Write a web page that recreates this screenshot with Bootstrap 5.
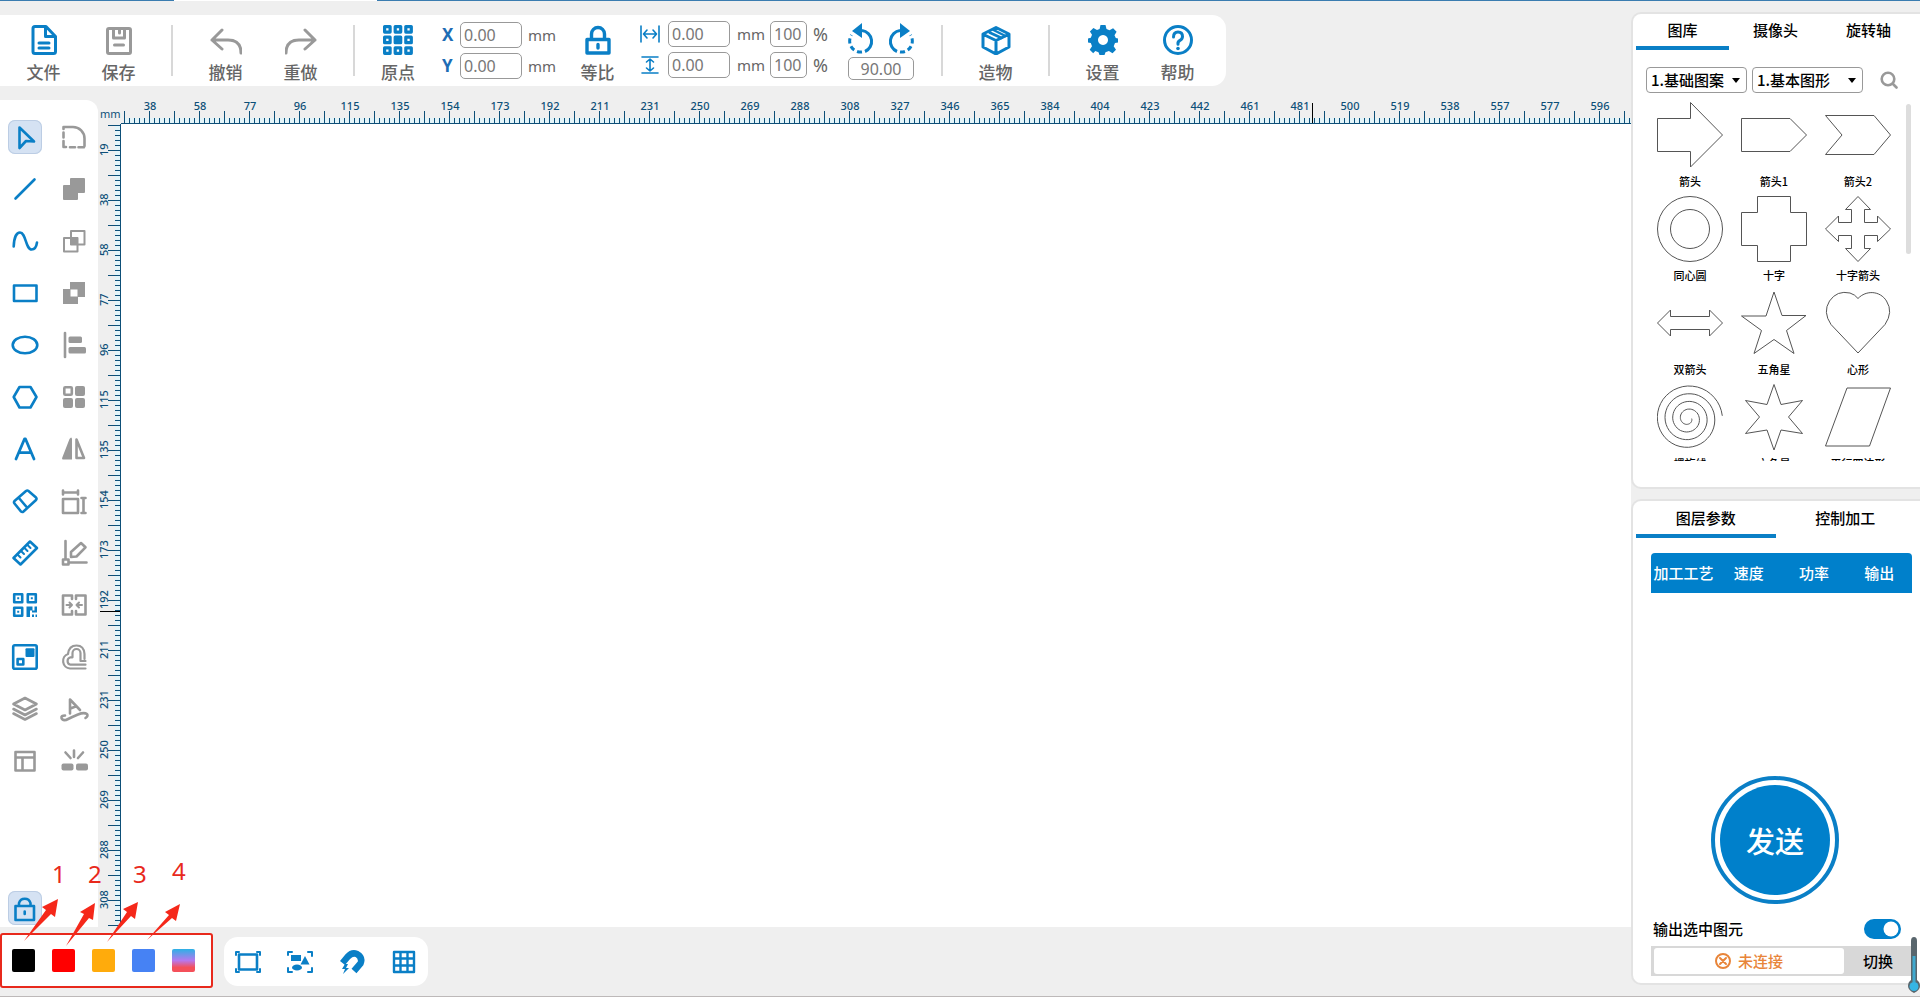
<!DOCTYPE html>
<html lang="zh-CN">
<head>
<meta charset="utf-8">
<meta name="viewport" content="width=device-width, initial-scale=1">
<title>激光雕刻</title>
<link href="https://cdn.jsdelivr.net/npm/bootstrap@5.3.0/dist/css/bootstrap.min.css" rel="stylesheet">
<style>
:root{--brand:#0a7fc6;--ink:#0d4f78;--shade:#efefef;--mute:#999}
body{background:var(--shade);font-family:"Noto Sans","Noto Sans CJK SC",sans-serif;font-size:15px;line-height:20px;color:#000;overflow:hidden}
svg{display:block;flex:none}
button{background:none;border:0;padding:0;color:inherit}
.ln{fill:none;stroke:currentColor;stroke-width:2.6;stroke-linejoin:round;stroke-linecap:round}
.fl{fill:currentColor;stroke:none}
.brand{color:var(--brand)}
.mute{color:var(--mute)}
.topline{height:1px}
.topline span{background:#3a7cb0}
.topline .seg-a{width:174px}
.topline .seg-b{width:203px;background:#fff}
.bottomline{height:1px;background:#bdb9b9}

/* toolbar */
.toolbar{flex:none;height:71px;margin:14px 0;padding:0 11px 0 6px;border-radius:0 14px 14px 0;color:#666;font-size:15px}
.act{width:75px;padding-top:10px;gap:6px}
.act.slim{width:56px}
.act span{font-size:17px;line-height:22px;font-weight:500;font-family:"Noto Sans CJK SC",sans-serif}
.rule{width:32px;padding:10px 15px}
.rule i{display:block;width:2px;height:51px;background:#d8d8d8}
.fld{height:26px;border:1px solid #999;border-radius:5px;padding:0 3px;color:#777;background:#fff;font-size:16px;line-height:22px;width:62px}
.fld.pct{width:37px}
.fld.deg{width:66px;height:23px;text-align:center}
.axis{width:18px;font-size:17px;font-weight:700;color:#1d6db5}
.xy{margin-left:16px;padding-top:7px;gap:5px}
.xy .unit{width:38px;padding-left:6px}
.wh{margin-left:5px;padding-top:6px;gap:5px}
.wh .unit{width:40px;padding-left:7px}
.wh .pc{width:41px;padding-left:6px;font-size:18px}
.rot{width:66px;margin-right:12px;padding-top:7px;gap:3px}

/* left tools */
.tools{width:98px;flex:none;border-radius:0 12px 0 0;padding:20px 7px 2px 8px}
.tools .col2{display:grid;grid-template-columns:34px 34px;column-gap:15px;row-gap:18px}
.tool{width:34px;height:34px;border-radius:7px}
.tool.on{background:#d5e2f3;box-shadow:inset 0 0 0 1px #bccde4}

/* rulers */
.board{display:grid;grid-template-columns:23px minmax(0,1fr);grid-template-rows:24px minmax(0,1fr)}
.corner{font-size:11px;line-height:14px;color:var(--ink);padding:7px 0 0 2px}
.hr-ruler,.vr-ruler{--t:var(--ink);color:var(--ink);font-size:11px;font-weight:500;line-height:12px;position:relative}
.hr-ruler{border-bottom:1px solid var(--t);padding-left:4px;
 background:repeating-linear-gradient(90deg,var(--t) 0 1px,transparent 1px 25px) 3px 11px/100% 12px no-repeat,
 repeating-linear-gradient(90deg,var(--t) 0 1px,#e3f4f9 1px 5px) 3px 18px/100% 5px no-repeat}
.hr-ruler span{width:50px;flex:none;text-align:center}
.vr-ruler{border-right:1px solid var(--t);padding-top:1px;
 background:repeating-linear-gradient(180deg,var(--t) 0 1px,transparent 1px 25px) 10px 1px/12px 100% no-repeat,
 repeating-linear-gradient(180deg,var(--t) 0 1px,#e3f4f9 1px 5px) 17px 1px/5px 100% no-repeat}
.vr-ruler span{height:50px;flex:none;width:12px;text-align:center;writing-mode:vertical-rl;transform:rotate(180deg)}
.hmark{position:absolute;width:1px;height:20px;top:3px;background:#000}
.vmark{position:absolute;height:1px;width:20px;left:2px;background:#000}

/* bottom strip */
.strip{height:69px;flex:none;position:relative;padding-top:6px;gap:11px}
.palette{width:213px;height:55px;border:2px solid #e8291c;border-radius:3px;padding:0 10px;gap:17px}
.sw{width:23px;height:23px;border-radius:2px}
.sw-k{background:#000}.sw-r{background:#f00}.sw-o{background:#ffab0c}.sw-b{background:#4682f4}
.sw-g{background:linear-gradient(#2cb1e6,#b678ee 50%,#f4505a 80%,#f4505a)}
.snap{width:204px;height:49px;margin-top:4px;border-radius:14px;padding:0 11px}
.notes{position:absolute;left:0;bottom:39px;pointer-events:none}
.notes text{font-size:24px;fill:#e8291c}

/* side panels */
.side{width:289px;flex:none;padding:11px 0;gap:10px;font-family:"Noto Sans CJK SC",sans-serif}
.pane{border:2px solid #e3e3e3;border-right:0;border-radius:10px 0 0 10px;background:#fff}
.tabs{margin:0 5px 0 3px}
.tabs button{flex:1 1 0;height:36px;border-bottom:4px solid transparent;font-size:15px;font-weight:500}
.tabs.low button{height:37px}
.tabs button.on{border-color:var(--brand)}
.pick{height:26px;border:1px solid #999;border-radius:4px;font-size:15px;font-weight:500;padding:0 0 1px 4px;color:#000;appearance:none;
 background:#fff url("data:image/svg+xml,%3Csvg xmlns='http://www.w3.org/2000/svg' width='8' height='5'%3E%3Cpath d='M0 0h8L4 5z'/%3E%3C/svg%3E") right 6px center no-repeat}
.pick-a{width:101px}.pick-b{width:111px}
.filters{margin:17px 0 0 13px;gap:5px}
.seek{margin-left:12px}
.gallery{height:359px;margin:9px 0 26px 15px;overflow:hidden}
.shapes{display:grid;grid-template-columns:repeat(3,84px);align-content:start}
.shapes button{display:flex;flex-direction:column;align-items:center;height:94px;gap:5px;font-size:11px;line-height:16px;font-weight:500}
.shapes svg{fill:none;stroke:#555;stroke-width:1}
.thumb{width:5px;height:150px;margin:2px 0 0 6px;border-radius:3px;background:#ddd}
.layers{margin:15px 8px 0 18px;color:#fff}
.layers table{width:100%;table-layout:fixed}
.layers th{background:#0080cb;height:40px;text-align:center;font-weight:500;white-space:nowrap;padding:0}
.layers th:first-child{border-radius:4px 0 0 0}.layers th:last-child{border-radius:0 4px 0 0}
.send{width:128px;height:128px;border-radius:50%;border:4px solid var(--brand);padding:5px;margin:auto 0 15px 78px}
.send span{display:flex;align-items:center;justify-content:center;height:100%;border-radius:50%;background:#0080cb;color:#fff;font-size:29px;font-weight:500}
.outrow{padding:0 19px 0 20px;font-weight:500}
.form-check-input.tog{width:37px;height:20px;margin:0;border:0;background-color:#0080cb;float:none}
.conn{margin:7px 8px 7px 18px;height:30px;background:#d8d8d8;padding:2px 0 2px 3px;font-weight:500}
.conn .state{width:190px;background:#fff;border-radius:3px;color:#e8853a;gap:7px}
.thermo{position:fixed;right:0;bottom:4px}
.rowfit{min-height:0}.colfit{min-width:0}
</style>
</head>
<body class="d-flex flex-column vh-100">
<div class="topline d-flex"><span class="seg-a"></span><span class="seg-b"></span><span class="flex-fill"></span></div>
<div class="rowfit d-flex flex-fill">
<main class="colfit d-flex flex-column flex-fill">

<header class="toolbar bg-white d-flex align-self-start">
 <button class="act d-flex flex-column align-items-center"><svg class="brand" width="30" height="30"><path class="ln" style="stroke-width:3" d="M4 3.500q0-2 2-2h11l9.500 10v15q0 2-2 2H6q-2 0-2-2zM16.500 2v9.500h9M10 18h10M10 23h10"/></svg><span>文件</span></button>
 <button class="act d-flex flex-column align-items-center"><svg class="mute" width="30" height="30"><path class="ln" style="stroke-width:3" d="M3.500 5q0-1.500 1.500-1.500h20q1.500 0 1.500 1.500v22q0 1.500-1.500 1.500H5q-1.500 0-1.500-1.500zM9.500 4v9h11V4M15.500 4v4M10.500 20h9"/></svg><span>保存</span></button>
 <div class="rule"><i></i></div>
 <button class="act d-flex flex-column align-items-center"><svg class="mute" width="32" height="30"><path class="ln" style="stroke-width:3" d="M12 5L2 15l10 9M2 15h16q13 0 13 13"/></svg><span>撤销</span></button>
 <button class="act d-flex flex-column align-items-center"><svg class="mute" width="32" height="30"><path class="ln" style="stroke-width:3" d="M20 5l10 10-10 9M30 15H14Q1 15 1 28"/></svg><span>重做</span></button>
 <div class="rule"><i></i></div>
 <button class="act slim d-flex flex-column align-items-center"><svg class="brand" width="30" height="30"><g class="ln" style="stroke-width:3.200"><rect x="1.600" y="1.600" width="5.500" height="5.500"/><rect x="12.200" y="1.600" width="5.500" height="5.500"/><rect x="22.800" y="1.600" width="5.500" height="5.500"/><rect x="1.600" y="12.200" width="5.500" height="5.500"/><rect x="12.200" y="12.200" width="5.500" height="5.500" fill="currentColor"/><rect x="22.800" y="12.200" width="5.500" height="5.500"/><rect x="1.600" y="22.800" width="5.500" height="5.500"/><rect x="12.200" y="22.800" width="5.500" height="5.500"/><rect x="22.800" y="22.800" width="5.500" height="5.500"/></g></svg><span>原点</span></button>
 <div class="xy d-flex flex-column">
  <div class="d-flex align-items-center"><label class="axis" for="px">X</label><input class="fld" id="px" value="0.00"><span class="unit">mm</span></div>
  <div class="d-flex align-items-center"><label class="axis" for="py">Y</label><input class="fld" id="py" value="0.00"><span class="unit">mm</span></div>
 </div>
 <button class="act d-flex flex-column align-items-center"><svg class="brand" width="30" height="30"><path class="ln" style="stroke-width:3.400" d="M4 14.500h22v13.500H4zM8.500 14V9a6.500 6.500 0 0 1 13 0v5M15 19.500v3.500"/></svg><span>等比</span></button>
 <div class="wh d-flex flex-column">
  <div class="d-flex align-items-center"><label for="sw" aria-label="宽" class="me-2"><svg class="brand" width="20" height="18"><path class="ln" style="stroke-width:1.600" d="M1 1v16M19 1v16M4 9h12M7 5L3.500 9 7 13M13 5l3.500 4-3.500 4"/></svg></label><input class="fld" id="sw" value="0.00"><span class="unit">mm</span><input class="fld pct" aria-label="宽度百分比" value="100"><span class="pc">%</span></div>
  <div class="d-flex align-items-center"><label for="sh" aria-label="高" class="me-2"><svg class="brand" width="20" height="18"><path class="ln" style="stroke-width:1.600" d="M2 1h16M2 17h16M10 3v12M6.500 6L10 3l3.500 3M6.500 12l3.500 3 3.500-3"/></svg></label><input class="fld" id="sh" value="0.00"><span class="unit">mm</span><input class="fld pct" aria-label="高度百分比" value="100"><span class="pc">%</span></div>
 </div>
 <div class="rot d-flex flex-column">
  <div class="d-flex justify-content-between">
   <button aria-label="逆时针旋转" class="brand"><svg width="27" height="32"><path class="ln" style="stroke-width:3;stroke-linecap:butt" d="M14 8.500a11 11 0 0 1 3 21"/><path class="ln" style="stroke-width:3;stroke-linecap:butt;stroke-dasharray:5 3" d="M14 30A11 11 0 0 1 3.500 13"/><path class="fl" d="M4 9l10-8v15z"/></svg></button>
   <button aria-label="顺时针旋转" class="brand"><svg width="27" height="32"><path class="ln" style="stroke-width:3;stroke-linecap:butt" d="M13 8.500a11 11 0 0 0-3 21"/><path class="ln" style="stroke-width:3;stroke-linecap:butt;stroke-dasharray:5 3" d="M13 30A11 11 0 0 0 23.500 13"/><path class="fl" d="M23 9L13 1v15z"/></svg></button>
  </div>
  <input class="fld deg" aria-label="旋转角度" value="90.00">
 </div>
 <div class="rule"><i></i></div>
 <button class="act d-flex flex-column align-items-center"><svg class="brand" width="30" height="30"><path class="ln" style="stroke-width:3" d="M15 2.500l13 6.500v13l-13 7-13-7V9zM2.500 9.500L15 15.500l12.500-6M15 15.500V29"/><path class="ln" style="stroke-width:2.500" d="M8.500 7.500l12 5.500M12.500 5l12 6"/></svg><span>造物</span></button>
 <div class="rule"><i></i></div>
 <button class="act d-flex flex-column align-items-center"><svg class="brand" width="30" height="30" viewBox="0 0 30 30"><path fill="currentColor" fill-rule="evenodd" d="M12.500 0h5l1 4 3 1.300 3.600-2.100 3.500 3.500-2.100 3.600L27.800 13l2.200.500v4l-3 .500-1.300 3.200 2.300 3.600-3.500 3.500-3.600-2.300-3.400 1.300-1 2.700h-5l-1-2.700-3.200-1.300L5.200 28.300l-3.500-3.500L4 21.200 2.800 18 0 17.500v-4l2.800-.7L4 9.700 1.900 6.400l3.500-3.500L9 5l2.600-1zM15 10a5 5 0 1 0 .01 0z"/></svg><span>设置</span></button>
 <button class="act d-flex flex-column align-items-center"><svg class="brand" width="30" height="30"><circle class="ln" style="stroke-width:3" cx="15" cy="15" r="13.500"/><path class="ln" style="stroke-width:3" d="M10.500 12q0-5 4.500-5t4.500 4.500q0 2.500-2.500 3.800t-2 4"/><circle class="fl" cx="15" cy="23.500" r="1.800"/></svg><span>帮助</span></button>
</header>

<div class="rowfit d-flex flex-fill">
 <nav class="tools bg-white d-flex flex-column justify-content-between" aria-label="绘图工具">
  <div class="col2">
   <button class="tool on brand" aria-label="选择"><svg width="34" height="34"><path class="ln" d="M11.500 7.500L26 21.500l-8-.5-6.500 7z"/></svg></button>
   <button class="tool mute" aria-label="倒角"><svg width="34" height="34"><path class="ln" d="M6.500 9V7H16a11.500 11.500 0 0 1 11.500 11.500V26M6.500 12.500v5M6.500 21v6H9M13 27.300h5M21.500 27.300h5.500"/></svg></button>
   <button class="tool brand" aria-label="直线"><svg width="34" height="34"><path class="ln" d="M7.500 26.500L26.500 7.500"/></svg></button>
   <button class="tool mute" aria-label="并集"><svg width="34" height="34"><path class="fl" d="M14 6h13q1 0 1 1v13q0 1-1 1h-6v6q0 1-1 1H7q-1 0-1-1V14q0-1 1-1h6V7q0-1 1-1z"/></svg></button>
   <button class="tool brand" aria-label="曲线"><svg width="34" height="34"><path class="ln" d="M5.700 22.500C6 14 8.500 8.500 12 8.500c6 0 5.500 17 11.700 17 3.300 0 4.800-3.500 5.300-7"/></svg></button>
   <button class="tool mute" aria-label="交集"><svg width="34" height="34"><path class="ln" style="stroke-width:2" d="M14 7h13.500v13.500H14zM7 14h13.500v13.500H7z"/><path class="fl" d="M13 13h8v8h-8z"/></svg></button>
   <button class="tool brand" aria-label="矩形"><svg width="34" height="34"><rect class="ln" x="6" y="9.500" width="22.500" height="15.500"/></svg></button>
   <button class="tool mute" aria-label="差集"><svg width="34" height="34"><path class="fl" fill-rule="evenodd" d="M13 6h15v15h-7v7H6V13h7zM13.500 13.500v7h7v-7z"/></svg></button>
   <button class="tool brand" aria-label="椭圆"><svg width="34" height="34"><ellipse class="ln" cx="17" cy="17" rx="12.300" ry="8.300"/></svg></button>
   <button class="tool mute" aria-label="对齐"><svg width="34" height="34"><path class="ln" d="M8 5v24"/><rect class="fl" x="11.500" y="8.500" width="13.500" height="6.500" rx="1.500"/><rect class="fl" x="11.500" y="19" width="17.500" height="6.500" rx="1.500"/></svg></button>
   <button class="tool brand" aria-label="多边形"><svg width="34" height="34"><path class="ln" d="M11.500 7h11L28.500 17l-6 10.500h-11L5.700 17z"/></svg></button>
   <button class="tool mute" aria-label="阵列"><svg width="34" height="34"><rect class="ln" x="7.300" y="7.300" width="7.500" height="7.500" rx="1"/><rect class="fl" x="18" y="6" width="10" height="10" rx="2"/><rect class="fl" x="6" y="18" width="10" height="10" rx="2"/><rect class="fl" x="18" y="18" width="10" height="10" rx="2"/></svg></button>
   <button class="tool brand" aria-label="文字"><svg width="34" height="34"><path class="ln" style="stroke-width:2.800" d="M8 27L16.500 7h1L26 27M11 20.700h12"/></svg></button>
   <button class="tool mute" aria-label="镜像"><svg width="34" height="34"><path class="fl" d="M15 27.500H6.500q-2 0-1.200-2L12.500 7q2-3 2.500 0z"/><path class="ln" d="M19.500 7.500v18.500H27z"/></svg></button>
   <button class="tool brand" aria-label="橡皮"><svg width="34" height="34"><path class="ln" d="M18 7q1.300-1 2.500 0l7.500 6.500q1 1.200 0 2.500L15.500 27.500q-1.200 1-2.500 0L6.500 19.500q-1-1.200 0-2.500zM10.500 13.500l8.500 10"/></svg></button>
   <button class="tool mute" aria-label="尺寸"><svg width="34" height="34"><rect class="ln" x="6" y="15" width="15" height="14"/><path class="ln" d="M6 8.500h15M6 6.500v4M21 6.500v4M26.500 14v15M24.500 14h4M24.500 29h4"/></svg></button>
   <button class="tool brand" aria-label="测量"><svg width="34" height="34"><path class="ln" d="M22 5.500l7 6.500-16.500 16.500L5.500 22z"/><path class="ln" style="stroke-width:2" d="M9.500 18.500l3 3M13 15l3 3M16.500 12l3 3M19.500 9l3 3"/></svg></button>
   <button class="tool mute" aria-label="节点编辑"><svg width="34" height="34"><path class="ln" d="M8.500 5v18M12 26.500h17.500M6 23.500h5.500v5H6zM24 7l4.500 4.300L19.500 20.500l-5.500.5v-5z"/></svg></button>
   <button class="tool brand" aria-label="二维码"><svg width="34" height="34"><path class="ln" d="M6.200 6.200h8v8h-8zM19.800 6.200h8v8h-8zM6.200 19.800h8v8h-8z"/><path class="fl" d="M9.200 9.200h2v2h-2zM22.800 9.200h2v2h-2zM9.200 22.800h2v2h-2zM18.500 18.500h6v4h-2.500v6.500h-3.500zM26.500 18.500H29v6h-5v-2h2.500zM24 26.500h2V29h-2zM27.500 26.500H29V29h-1.500z"/></svg></button>
   <button class="tool mute" aria-label="断开"><svg width="34" height="34"><path class="ln" d="M6 14V7.500h9V11M15 23v3.500H6V20M19 11V7.500h9.500v19H19V23M6 14v6"/><path class="ln" style="stroke-width:2" d="M9.500 17H15M12.500 14.500L15 17l-2.500 2.500M25 17h-5.500M22 14.500L19.500 17l2.500 2.500"/></svg></button>
   <button class="tool brand" aria-label="位图"><svg width="34" height="34"><rect class="ln" x="5.200" y="5.300" width="23.500" height="23.500" rx="1.500"/><rect class="fl" x="17.500" y="8.300" width="9" height="8.700" rx="1"/><rect class="ln" x="9.600" y="19" width="5.700" height="5.500"/></svg></button>
   <button class="tool mute" aria-label="轮廓"><svg width="34" height="34"><path class="ln" style="stroke-width:2.200" d="M28.500 28.500H13a7.500 7.500 0 0 1-2-14.500q1-8.500 8.500-8.500t8 8.500v5M28.500 24.700H13.500a3.800 3.800 0 0 1 0-7.400h2V13a4 4 0 0 1 8 0v8h5"/></svg></button>
   <button class="tool mute" aria-label="图层"><svg width="34" height="34"><path class="ln" d="M17 6l11.500 6L17 18 5.500 12zM5.500 17L17 23l11.500-6M5.500 21.500L17 27.500l11.500-6"/></svg></button>
   <button class="tool mute" aria-label="路径文字"><svg width="34" height="34"><path class="ln" d="M13 21.500V7.500l10 10.500M13.500 16.500l5-2M8 23.500q-4 0-3.500 2.500t4.500 2Q15 25 21 22.500t9-.5q1.500 2-1.500 4"/></svg></button>
   <button class="tool mute" aria-label="布局"><svg width="34" height="34"><path class="ln" d="M7.500 8h19v18.500h-19zM7.500 13.500h19M14.500 13.500v13"/></svg></button>
   <button class="tool mute" aria-label="炸开"><svg width="34" height="34"><path class="ln" d="M17 6.500V13M8.500 8.500l5 5.500M26 8.500L21 14"/><rect class="fl" x="4.500" y="19.500" width="12" height="7" rx="2"/><rect class="fl" x="19" y="19.500" width="12" height="7" rx="2"/></svg></button>
  </div>
  <button class="tool on brand" aria-label="锁定"><svg width="34" height="34"><path class="ln" d="M7.500 15h18.500v14H7.500zM11 15v-3a6 6 0 0 1 11.500 0v3M16.700 20.500v2.500"/></svg></button>
 </nav>
 <section class="board flex-fill" aria-label="画布">
  <div class="corner">mm</div>
  <div class="hr-ruler d-flex" id="hruler"><i class="hmark"></i></div>
  <div class="vr-ruler d-flex flex-column" id="vruler"><i class="vmark"></i></div>
  <div class="bg-white"></div>
 </section>
</div>

<footer class="strip d-flex align-items-start">
 <div class="palette bg-white d-flex align-items-center">
  <button class="sw sw-k" aria-label="黑色"></button><button class="sw sw-r" aria-label="红色"></button><button class="sw sw-o" aria-label="橙色"></button><button class="sw sw-b" aria-label="蓝色"></button><button class="sw sw-g" aria-label="渐变"></button>
 </div>
 <div class="snap bg-white brand d-flex align-items-center justify-content-between">
  <button aria-label="适应画布"><svg width="26" height="26"><path class="ln" d="M4 5.500h18v15H4z"/><path class="ln" style="stroke-width:2" d="M1 6V3h3M22 3h3v3M1 20v3h3M22 23h3v-3"/></svg></button>
  <button aria-label="适应图形"><svg width="26" height="26"><path class="ln" style="stroke-width:2" d="M1 6V3h4M21 3h4v4M1 19v4h4M21 23h4v-4"/><path class="fl" d="M4 6h10v6H4zM18 7l4.500 8.500h-9z"/><ellipse class="fl" cx="10" cy="18.500" rx="5" ry="3"/></svg></button>
  <button aria-label="吸附"><svg width="26" height="26"><path fill="none" stroke="currentColor" stroke-width="6.500" d="M3.500 14L9 7.500q4-4.500 9-2.500 6 3.500 3.500 9.500L15 22"/><path class="fl" d="M6 15l-3 5h3l-2 5 6-6H7l2-4z"/></svg></button>
  <button aria-label="网格"><svg width="26" height="26"><path class="ln" style="stroke-width:2.400" d="M3 3h20v20H3zM3 9.500h20M3 16.500h20M9.500 3v20M16.500 3v20"/></svg></button>
 </div>
 <svg class="notes" width="215" height="96" viewBox="0 860 215 96" aria-label="颜色标注">
  <text x="52" y="882">1</text><text x="88" y="882">2</text><text x="133" y="882">3</text><text x="172" y="879">4</text>
  <g fill="#f5281a"><path d="M24 940L46 909l-4-3 16-8-3 18-4-3z"/><path d="M66 945L84 913l-4-2 15-9-2 17-4-2z"/><path d="M107 941l20-30-4-3 15-7-3 17-4-3z"/><path d="M147 939l22-25-4-3 15-8-4 17-4-3z"/></g>
 </svg>
</footer>
</main>

<aside class="side d-flex flex-column">
 <section class="pane">
  <div class="tabs d-flex"><button class="on">图库</button><button>摄像头</button><button>旋转轴</button></div>
  <div class="filters d-flex align-items-center">
   <select class="pick pick-a" aria-label="图案分类"><option>1.基础图案</option></select>
   <select class="pick pick-b" aria-label="图形分类"><option>1.基本图形</option></select>
   <button class="mute seek" aria-label="搜索"><svg width="18" height="18"><circle class="ln" cx="8" cy="8" r="6.300"/><path class="ln" d="M13 13l3.500 3.500"/></svg></button>
  </div>
  <div class="gallery d-flex">
   <div class="shapes">
    <button><svg width="66" height="66"><path d="M.5 16.500h33v-16L65.500 33l-32 32V49.500H.5z"/></svg>箭头</button>
    <button><svg width="66" height="66"><path d="M.5 16.500h48.500L65.500 33 49 49.500H.5z"/></svg>箭头1</button>
    <button><svg width="66" height="66"><path d="M.5 13.500H49L65.500 33 49 52.500H.5L17 33z"/></svg>箭头2</button>
    <button><svg width="66" height="66"><circle cx="33" cy="33" r="32.500"/><circle cx="33" cy="33" r="19.500"/></svg>同心圆</button>
    <button><svg width="66" height="66"><path d="M16.500.5h33v16h16v33h-16v16h-33v-16H.5v-33h16z"/></svg>十字</button>
    <button><svg width="66" height="66"><path d="M33 .5l12.500 13h-6v13h13v-6.500L65.500 33 52.500 45.500v-6h-13v13h6L33 65.500l-12.500-13h6v-13h-13v6L.5 33l13-13v6.500h13v-13h-6z"/></svg>十字箭头</button>
    <button><svg width="66" height="66"><path d="M.5 33l13-13v6.500h39V20l13 13-13 13v-6.500h-39V46z"/></svg>双箭头</button>
    <button><svg width="66" height="66"><path d="M33 2l8 23.500h24L45.500 40.500 53 63.500l-20-14-20 14 7.500-23L.5 26H25z"/></svg>五角星</button>
    <button><svg width="66" height="66"><path d="M33 8.500C41 0 55 .5 61.500 11q7 11-1.500 23.500L33 63 6 34.500Q-2.500 22 4.500 11 12 0 25 3q5 1.500 8 5.500z"/></svg>心形</button>
    <button><svg width="66" height="66"><path id="spiral"/></svg>螺旋线</button>
    <button><svg width="66" height="66"><path d="M33 .5l7 20 21.500-4L47.500 33l14 16.500L40 46l-7 20-7-20-21.500 3.500 14-16.500-14-16.500 21.500 4z"/></svg>六角星</button>
    <button><svg width="66" height="66"><path d="M22 4h43.500L44.500 62H.5z"/></svg>平行四边形</button>
   </div>
   <div class="thumb"></div>
  </div>
 </section>
 <section class="pane d-flex flex-column flex-fill">
  <div class="tabs low d-flex"><button class="on">图层参数</button><button>控制加工</button></div>
  <div class="layers"><table><thead><tr><th>加工工艺</th><th>速度</th><th>功率</th><th>输出</th></tr></thead></table></div>
  <button class="send"><span>发送</span></button>
  <div class="outrow d-flex justify-content-between align-items-center form-switch"><label for="outsel">输出选中图元</label><input class="form-check-input tog" type="checkbox" role="switch" id="outsel" checked></div>
  <div class="conn d-flex">
   <div class="state d-flex align-items-center justify-content-center"><svg width="16" height="16"><circle class="ln" cx="8" cy="8" r="7" style="stroke-width:2"/><path class="ln" style="stroke-width:2" d="M5 5l6 6M11 5l-6 6"/></svg>未连接</div>
   <button class="flex-fill fw-medium">切换</button>
  </div>
 </section>
</aside>
</div>
<div class="bottomline"></div>
<svg class="thermo" width="12" height="56"><path fill="#59666d" d="M3 4q0-4 3-4t3 4v39q3 2 3 6t-6 7q-6-3-6-7t3-6z"/><path fill="#3fa9cf" d="M4.500 19h3v26h-3z"/><circle cx="6" cy="49.500" r="4.500" fill="#35b5e5"/></svg>
<script src="https://cdn.jsdelivr.net/npm/bootstrap@5.3.0/dist/js/bootstrap.bundle.min.js"></script>
<script>
// ruler labels: one per 50 screen pixels
const marks = [19,38,58,77,96,115,135,154,173,192,211,231,250,269,288,308,327,346,365,384,404,423,442,461,481,500,519,538,557,577,596,615,635,654,673,692];
function fill(id, size, from) {
  const el = document.getElementById(id);
  marks.slice(from, from + Math.floor(size(el) / 50)).forEach(v => {
    const s = document.createElement('span');
    s.textContent = v;
    el.appendChild(s);
  });
}
fill('hruler', el => el.clientWidth, 1);
fill('vruler', el => el.clientHeight, 0);
document.querySelector('.hmark').style.left = '1191px';
document.querySelector('.vmark').style.top = '487px';
// Archimedean spiral, four turns
let d = '';
for (let a = 0; a <= 8 * Math.PI + 0.01; a += 0.15) {
  const r = 3.7 + a * 30.8 / (8 * Math.PI);
  d += (d ? 'L' : 'M') + (31 + r * Math.cos(a)).toFixed(1) + ' ' + (34.6 + r * Math.sin(a)).toFixed(1);
}
document.getElementById('spiral').setAttribute('d', d);
</script>
</body>
</html>
